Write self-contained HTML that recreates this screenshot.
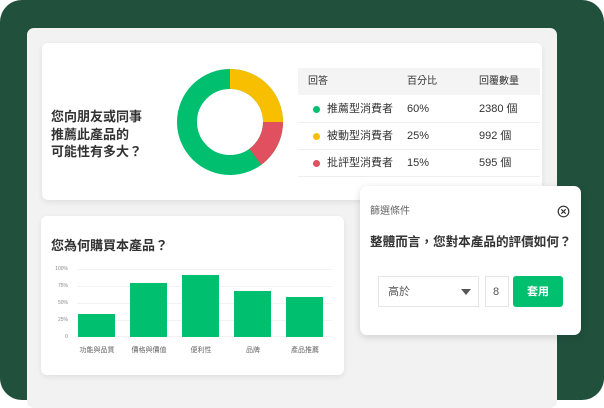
<!DOCTYPE html>
<html><head><meta charset="utf-8"><style>
*{margin:0;padding:0;box-sizing:border-box}
body{width:604px;height:400px;overflow:hidden;background:#fff;font-family:"Liberation Sans","Noto Sans CJK TC",sans-serif;position:relative}
.a{position:absolute}
.bg{left:0;top:0;width:604px;height:400px;background:#21503d;border-radius:22px}
.panel{left:27px;top:28px;width:530px;height:380px;background:#f2f2f2;border-radius:7px}
.card{background:#fff;border-radius:6px;box-shadow:0 2px 6px rgba(0,0,0,.08)}
.t{white-space:nowrap;color:#333;line-height:14px}
</style></head><body>
<div class="a bg"></div>
<div class="a panel"></div>
<div class="a card" style="left:42px;top:43px;width:500px;height:157px"></div>
<div class="a t" style="left:51px;top:108px;font-size:13px;font-weight:bold;line-height:17.5px">您向朋友或同事<br>推薦此產品的<br>可能性有多大？</div>
<svg class="a" style="left:176px;top:68px" width="108" height="108" viewBox="0 0 108 108">
<g transform="translate(54,54)" fill="none" stroke-width="20">
<circle r="43" stroke="#00bf6f"/>
<path d="M0,-43 A43,43 0 0 1 43,0" stroke="#f8be00"/>
<path d="M43,0 A43,43 0 0 1 25.3,34.8" stroke="#e0505e"/>
</g></svg>
<div class="a" style="left:298px;top:68px;width:242px;height:27px;background:#f4f4f4"></div>
<div class="a t" style="left:308px;top:75px;font-size:10px">回答</div>
<div class="a t" style="left:407px;top:75px;font-size:10px">百分比</div>
<div class="a t" style="left:479px;top:75px;font-size:10px">回覆數量</div>
<div class="a" style="left:298px;top:122px;width:242px;height:1px;background:#eee"></div>
<div class="a" style="left:298px;top:149px;width:242px;height:1px;background:#eee"></div>
<div class="a" style="left:298px;top:176px;width:242px;height:1px;background:#eee"></div>
<div class="a" style="left:313px;top:106px;width:7px;height:7px;border-radius:50%;background:#00bf6f"></div>
<div class="a" style="left:313px;top:133px;width:7px;height:7px;border-radius:50%;background:#f8be00"></div>
<div class="a" style="left:313px;top:160px;width:7px;height:7px;border-radius:50%;background:#e0505e"></div>
<div class="a t" style="left:327px;top:102px;font-size:11px">推薦型消費者</div>
<div class="a t" style="left:327px;top:129px;font-size:11px">被動型消費者</div>
<div class="a t" style="left:327px;top:156px;font-size:11px">批評型消費者</div>
<div class="a t" style="left:407px;top:102px;font-size:11px">60%</div>
<div class="a t" style="left:407px;top:129px;font-size:11px">25%</div>
<div class="a t" style="left:407px;top:156px;font-size:11px">15%</div>
<div class="a t" style="left:479px;top:102px;font-size:11px">2380 個</div>
<div class="a t" style="left:479px;top:129px;font-size:11px">992 個</div>
<div class="a t" style="left:479px;top:156px;font-size:11px">595 個</div>

<div class="a card" style="left:41px;top:216px;width:303px;height:159px"></div>
<div class="a t" style="left:51px;top:238px;font-size:13px;font-weight:bold;line-height:16px">您為何購買本產品？</div>
<div class="a" style="left:77px;top:269px;width:255px;height:1px;background:#f2f2f2"></div>
<div class="a" style="left:77px;top:286px;width:255px;height:1px;background:#f2f2f2"></div>
<div class="a" style="left:77px;top:303px;width:255px;height:1px;background:#f2f2f2"></div>
<div class="a" style="left:77px;top:320px;width:255px;height:1px;background:#f2f2f2"></div>
<div class="a" style="left:77px;top:336px;width:255px;height:1px;background:#f2f2f2"></div>
<div class="a t" style="left:50px;top:261px;font-size:5px;color:#888;width:18px;text-align:right;line-height:17px">100%<br>75%<br>50%<br>25%<br>0</div>
<div class="a" style="left:78px;top:314px;width:37px;height:23px;background:#00bf6f"></div>
<div class="a" style="left:130px;top:283px;width:37px;height:54px;background:#00bf6f"></div>
<div class="a" style="left:182px;top:275px;width:37px;height:62px;background:#00bf6f"></div>
<div class="a" style="left:234px;top:291px;width:37px;height:46px;background:#00bf6f"></div>
<div class="a" style="left:286px;top:297px;width:37px;height:40px;background:#00bf6f"></div>
<div class="a t" style="left:76px;top:344px;font-size:7px;color:#666;width:42px;text-align:center">功能與品質</div>
<div class="a t" style="left:128px;top:344px;font-size:7px;color:#666;width:42px;text-align:center">價格與價值</div>
<div class="a t" style="left:180px;top:344px;font-size:7px;color:#666;width:42px;text-align:center">便利性</div>
<div class="a t" style="left:232px;top:344px;font-size:7px;color:#666;width:42px;text-align:center">品牌</div>
<div class="a t" style="left:284px;top:344px;font-size:7px;color:#666;width:42px;text-align:center">產品推薦</div>

<div class="a card" style="left:360px;top:186px;width:221px;height:149px;border-radius:7px;box-shadow:0 2px 8px rgba(0,0,0,.15)"></div>
<div class="a t" style="left:370px;top:205px;font-size:10px;color:#666">篩選條件</div>
<svg class="a" style="left:557px;top:205px" width="13" height="13" viewBox="0 0 13 13"><circle cx="6.5" cy="6.5" r="5.3" fill="none" stroke="#333" stroke-width="1.2"/><path d="M4.3,4.3L8.7,8.7M8.7,4.3L4.3,8.7" stroke="#333" stroke-width="1.2"/></svg>
<div class="a t" style="left:370px;top:234px;font-size:12.6px;font-weight:bold;line-height:16px">整體而言，您對本產品的評價如何？</div>
<div class="a" style="left:378px;top:276px;width:101px;height:31px;border:1px solid #e5e5e5;background:#fff"></div>
<div class="a t" style="left:388px;top:285px;font-size:11px;color:#555">高於</div>
<div class="a" style="left:461px;top:289px;width:0;height:0;border-left:5px solid transparent;border-right:5px solid transparent;border-top:6px solid #555"></div>
<div class="a" style="left:485px;top:276px;width:24px;height:31px;border:1px solid #e5e5e5;background:#fff"></div>
<div class="a t" style="left:493px;top:285px;font-size:11px;color:#555">8</div>
<div class="a" style="left:513px;top:276px;width:50px;height:31px;background:#00bf6f;border-radius:3px"></div>
<div class="a t" style="left:527px;top:285px;font-size:11px;color:#fff;font-weight:bold">套用</div>
</body></html>
